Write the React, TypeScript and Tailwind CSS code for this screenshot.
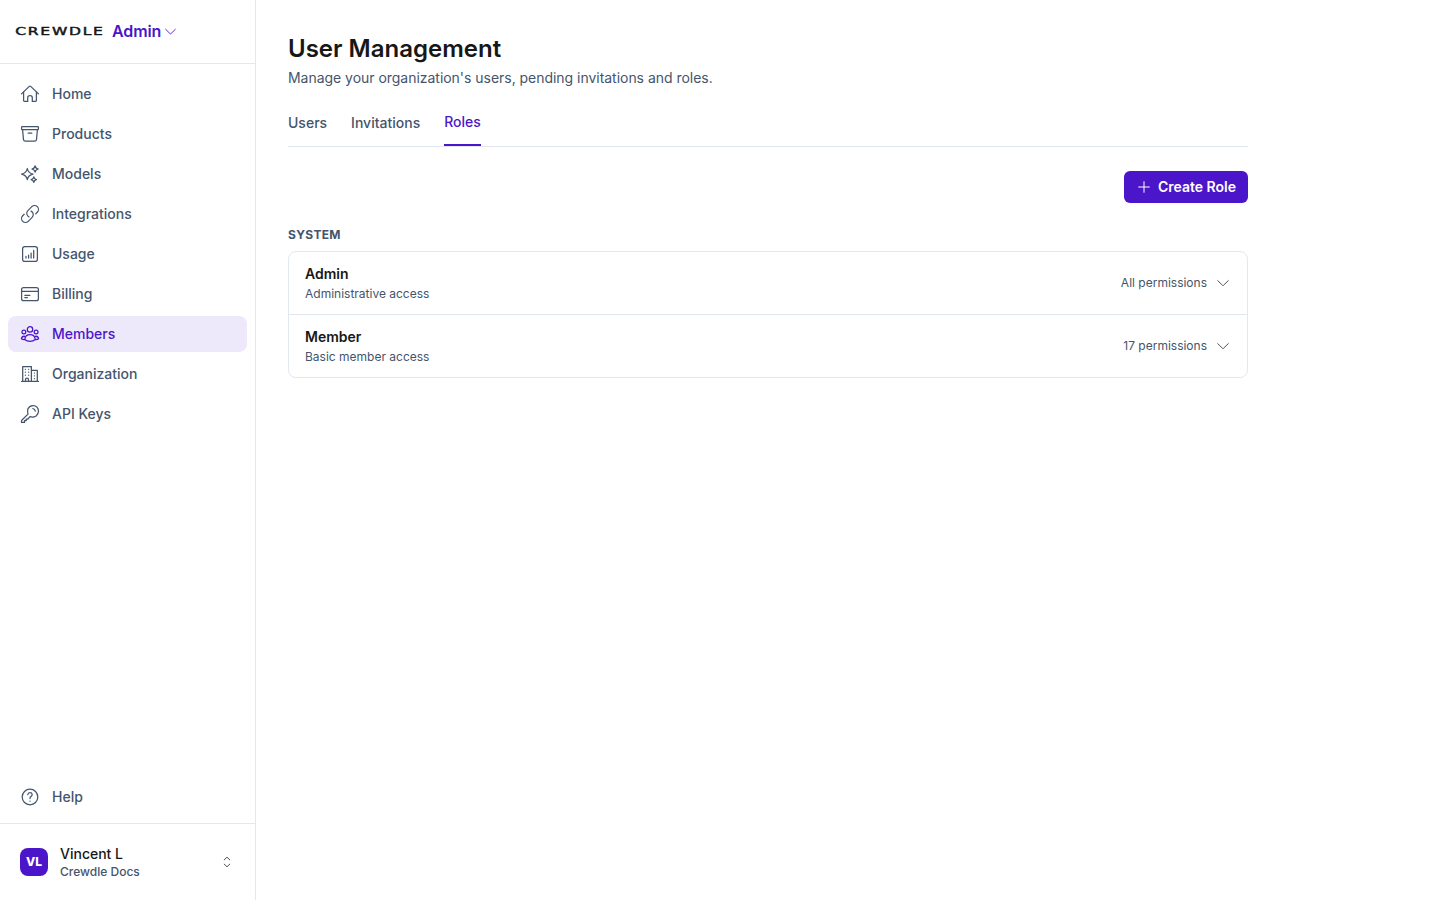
import React from 'react';

type IconProps = {
  children: React.ReactNode;
  className?: string;
};

const Icon: React.FC<IconProps> = ({ children, className = 'size-5' }) => (
  <svg
    className={`shrink-0 ${className}`}
    viewBox="0 0 20 20"
    fill="none"
    stroke="currentColor"
    strokeWidth="1.25"
    strokeLinecap="round"
    strokeLinejoin="round"
  >
    {children}
  </svg>
);

const ChevronDown: React.FC<{ className?: string }> = ({ className }) => (
  <svg className={className} viewBox="0 0 12 12" fill="none" stroke="currentColor" strokeLinecap="round" strokeLinejoin="round">
    <path d="M.7 3.6 5.6 8.4q.4.4.8 0l4.9-4.8" />
  </svg>
);

const navItems = [
  {
    label: 'Home',
    icon: (
      <Icon>
        <path d="M1.5 9.9 9.3 2.4q.7-.6 1.4 0l7.8 7.5" />
        <path d="M3.6 8.2v8.4q0 .8.8.8h3.3v-3.6q0-2.1 2.3-2.1t2.3 2.1v3.6h3.3q.8 0 .8-.8V8.2" />
      </Icon>
    ),
  },
  {
    label: 'Products',
    icon: (
      <Icon>
        <rect x="1.6" y="2.7" width="16.8" height="2.9" rx=".6" />
        <path d="m2.6 5.7.9 9.9q.2 1.6 1.8 1.6h9.4q1.6 0 1.8-1.6l.9-9.9M8.2 9.2h3.6" />
      </Icon>
    ),
  },
  {
    label: 'Models',
    icon: (
      <Icon>
        <path d="M7.3 4.5Q8.2 9.1 13 10.1 8.2 11.1 7.3 15.7 6.4 11.1 1.6 10.1 6.4 9.1 7.3 4.5Z" />
        <path d="M15.1 1.8Q15.6 4.5 18.3 5 15.6 5.5 15.1 8.2 14.6 5.5 11.9 5 14.6 4.5 15.1 1.8Z" />
        <path d="M13.8 12.9Q14.2 15.2 16.5 15.6 14.2 16 13.8 18.3 13.4 16 11.1 15.6 13.4 15.2 13.8 12.9Z" />
      </Icon>
    ),
  },
  {
    label: 'Integrations',
    icon: (
      <Icon>
        <g transform="translate(-.4 -.4) scale(.867)" strokeWidth="1.4">
          <path d="M13.19 8.688a4.5 4.5 0 0 1 1.242 7.244l-4.5 4.5a4.5 4.5 0 0 1-6.364-6.364l1.757-1.757m13.35-.622 1.757-1.757a4.5 4.5 0 0 0-6.364-6.364l-4.5 4.5a4.5 4.5 0 0 0 1.242 7.244" />
        </g>
      </Icon>
    ),
  },
  {
    label: 'Usage',
    icon: (
      <Icon>
        <rect x="2.6" y="2.6" width="14.8" height="14.8" rx="2.2" />
        <path d="M6 12.3v1.8M8.6 11v3.1M11.1 9v5.1M13.7 6.4v7.7" />
      </Icon>
    ),
  },
  {
    label: 'Billing',
    icon: (
      <Icon>
        <rect x="1.6" y="3.5" width="16.8" height="13.2" rx="2" />
        <path d="M1.6 7.3h16.8M4.8 11.3h5.1M4.8 13.5h2.6" />
      </Icon>
    ),
  },
  {
    label: 'Members',
    active: true,
    icon: (
      <Icon>
        <circle cx="10" cy="5.4" r="2.7" />
        <circle cx="3.9" cy="8" r="1.9" />
        <circle cx="16.1" cy="8" r="1.9" />
        <path d="M4.7 15.6q.6-4.9 5.3-4.9t5.3 4.9q-2.2 1.8-5.3 1.8t-5.3-1.8Z" />
        <path d="M4.7 12.3q-2.7-.4-3.3 2.4 1.3 1 3 .9M15.3 12.3q2.7-.4 3.3 2.4-1.3 1-3 .9" />
      </Icon>
    ),
  },
  {
    label: 'Organization',
    icon: (
      <Icon>
        <path d="M1.6 17.4h16.8M2.7 17.2V2.6h8.7v14.6M11.4 6.4h5.9v10.8M5.5 17.2v-1.5q0-1.5 1.5-1.5t1.5 1.5v1.5" />
        <path d="M5.4 5.3h.1M8.6 5.3h.1M5.4 8.2h.1M8.6 8.2h.1M5.4 11.2h.1M8.6 11.2h.1M14.4 9.1h.1M14.4 11.8h.1M14.4 14.5h.1" />
      </Icon>
    ),
  },
  {
    label: 'API Keys',
    icon: (
      <Icon>
        <path d="M8 10.1 2 16q-.5.5-.5 1.1v1.3h3v-1.7h1.7V15h1.7l2.1-2.3q3.2 1.2 6.1-.8 2.4-2 2.4-5-.4-4.9-5.4-5.4-3.4 0-5.1 3.1-1 2.6 0 5.5Z" />
        <path d="M12.9 4.7q2 .3 2.4 2.4" />
      </Icon>
    ),
  },
];

const roles = [
  { name: 'Admin', description: 'Administrative access', permissions: 'All permissions' },
  { name: 'Member', description: 'Basic member access', permissions: '17 permissions' },
];

const Sidebar: React.FC = () => (
  <aside className="flex w-64 shrink-0 flex-col border-r border-slate-200">
    <div className="flex h-16 items-center border-b border-slate-200 px-4 pb-px">
      <svg className="h-3 w-[88px] overflow-visible" viewBox="0 0 88 12">
        <text
          x="-.8"
          y="10"
          textLength="89.5"
          lengthAdjust="spacingAndGlyphs"
          strokeWidth=".45"
          className="fill-neutral-900 stroke-neutral-900 font-['DejaVu_Sans',sans-serif] text-[10.5px] tracking-[1.2px]"
        >
          CREWDLE
        </text>
      </svg>
      <button className="ml-2 flex items-center gap-1 font-semibold tracking-[-0.1px] text-[#4b16c9]">
        Admin
        <ChevronDown className="size-[11px]" />
      </button>
    </div>

    <nav className="flex flex-1 flex-col gap-1 px-2 pt-3">
      {navItems.map((item) => (
        <a
          key={item.label}
          className={`flex h-9 items-center gap-3 rounded-lg px-3 text-sm font-medium ${
            item.active ? 'bg-[#ede8fa] text-[#4b16c9]' : 'text-slate-600'
          }`}
        >
          {item.icon}
          {item.label}
        </a>
      ))}
    </nav>

    <div className="px-2 pb-2">
      <a className="flex h-9 items-center gap-3 px-3 text-sm font-medium text-slate-600">
        <Icon>
          <circle cx="10" cy="10" r="7.8" />
          <path d="M7.8 7.7q.2-2 2.2-2t2.2 1.9q0 1.2-1.1 1.8T10 11.5M10 14.1v.1" />
        </Icon>
        Help
      </a>
    </div>

    <div className="flex items-center gap-3 border-t border-slate-200 p-5">
      <div className="flex size-7 items-center justify-center rounded-lg bg-[#4b16c9] text-xs font-extrabold text-white">
        VL
      </div>
      <div className="flex-1 font-medium">
        <p className="text-sm text-neutral-900">Vincent L</p>
        <p className="text-xs text-slate-600">Crewdle Docs</p>
      </div>
      <svg className="mr-0.5 h-3 w-3 text-neutral-600" viewBox="0 0 12 12" fill="none" stroke="currentColor" strokeLinecap="round" strokeLinejoin="round">
        <path d="M3.2 3.9 6 1.2l2.8 2.7M3.2 8.1 6 10.8l2.8-2.7" />
      </svg>
    </div>
  </aside>
);

const App: React.FC = () => {
  return (
    <div className="flex h-screen bg-white font-[Inter,sans-serif]">
      <Sidebar />

      <main className="flex-1">
        <div className="max-w-5xl p-8">
          <h1 className="pt-px text-2xl font-semibold text-neutral-900">User Management</h1>
          <p className="mt-[3px] text-sm tracking-[-0.03px] text-slate-600">
            Manage your organization's users, pending invitations and roles.
          </p>

          <div className="mt-6 flex gap-6 border-b border-slate-200 text-sm font-medium text-slate-600">
            <button className="pb-3">Users</button>
            <button className="pb-3">Invitations</button>
            <button className="border-b-2 border-[#4b16c9] pb-3 text-[#4b16c9]">Roles</button>
          </div>

          <div className="mt-6 flex justify-end">
            <button className="flex h-8 items-center gap-2 rounded-md bg-[#4b16c9] pr-3 pl-3.5 text-sm font-semibold text-white">
              <svg className="size-3" viewBox="0 0 12 12" fill="none" stroke="currentColor" strokeLinecap="round">
                <path d="M6 .7v10.6M.7 6h10.6" />
              </svg>
              Create Role
            </button>
          </div>

          <h2 className="mt-6 text-xs font-bold tracking-wide text-slate-600">SYSTEM</h2>
          <div className="mt-2 divide-y divide-slate-200 rounded-lg border border-slate-200">
            {roles.map((role) => (
              <div key={role.name} className="flex items-center justify-between px-4 py-3">
                <div>
                  <p className="text-sm font-semibold text-neutral-900">{role.name}</p>
                  <p className="mt-0.5 text-xs text-slate-600">{role.description}</p>
                </div>
                <div className="flex items-center gap-2.5 pr-0.5 text-xs text-slate-600">
                  {role.permissions}
                  <ChevronDown className="size-3 text-neutral-600" />
                </div>
              </div>
            ))}
          </div>
        </div>
      </main>
    </div>
  );
};

export default App;
